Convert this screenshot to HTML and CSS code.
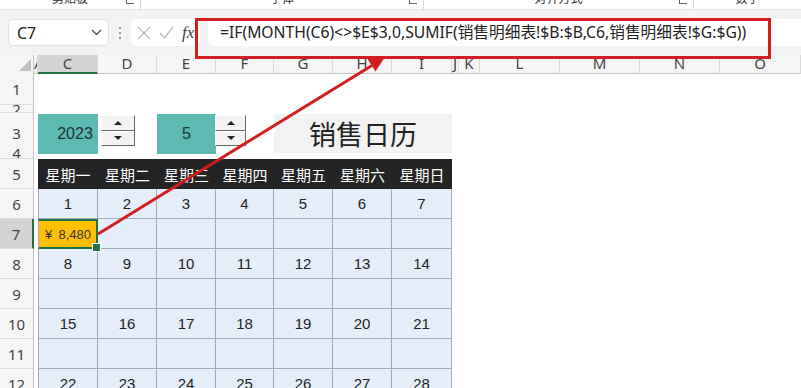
FILE: index.html
```html
<html>
    <head>
        <title>销售日历</title>
        <link rel="stylesheet" href="styles.css">
    </head>
    <body>
        <div class="ribbon">
            <div class="group g1"><span>剪贴板</span><i class="launch"></i></div>
            <div class="group g2"><span>字体</span><i class="launch"></i></div>
            <div class="group g3"><span>对齐方式</span><i class="launch"></i></div>
            <div class="group g4"><span>数字</span></div>
        </div>

        <div class="fbar">
            <div class="namebox">
                <span>C7</span>
                <svg width="11" height="7" viewBox="0 0 11 7"><path d="M1 1l4.5 4.5L10 1" fill="none" stroke="#555" stroke-width="1.4"/></svg>
            </div>
            <div class="grip"><b></b><b></b><b></b></div>
            <div class="fbtns">
                <svg width="14" height="14" viewBox="0 0 14 14"><path d="M1 1l12 12M13 1L1 13" stroke="#bdbdbd" stroke-width="1.3"/></svg>
                <svg width="15" height="14" viewBox="0 0 15 14"><path d="M1 7l4.5 5L14 1" fill="none" stroke="#bdbdbd" stroke-width="1.3"/></svg>
                <span class="fx">fx</span>
            </div>
            <div class="finput">=IF(MONTH(C6)&lt;&gt;$E$3,0,SUMIF(销售明细表!$B:$B,C6,销售明细表!$G:$G))</div>
        </div>

        <div class="sheet">
            <div class="row hdr">
                <div class="corner"><svg width="34" height="18"><polygon points="31,4 31,16 19,16" fill="#bfbfbf"/></svg></div>
                <div class="ch a">A</div>
                <div class="ch sel">C</div>
                <div class="ch">D</div>
                <div class="ch">E</div>
                <div class="ch">F</div>
                <div class="ch">G</div>
                <div class="ch">H</div>
                <div class="ch">I</div>
                <div class="ch">J</div>
                <div class="ch">K</div>
                <div class="ch">L</div>
                <div class="ch">M</div>
                <div class="ch">N</div>
                <div class="ch">O</div>
            </div>
            <div class="row r1"><div class="rh">1</div></div>
            <div class="row r2"><div class="rh">2</div></div>
            <div class="row r3">
                <div class="rh">3</div>
                <div></div>
                <div class="teal year">2023</div>
                <div><div class="spin"><span class="up"></span><span class="down"></span></div></div>
                <div class="teal">5</div>
                <div><div class="spin narrow"><span class="up"></span><span class="down"></span></div></div>
                <div class="title">销售日历</div>
            </div>
            <div class="row r4"><div class="rh">4</div></div>
            <div class="row r5">
                <div class="rh">5</div>
                <div></div>
                <div class="wd">星期一</div>
                <div class="wd">星期二</div>
                <div class="wd">星期三</div>
                <div class="wd">星期四</div>
                <div class="wd">星期五</div>
                <div class="wd">星期六</div>
                <div class="wd">星期日</div>
            </div>
            <div class="row">
                <div class="rh">6</div>
                <div></div>
                <div class="cell">1</div>
                <div class="cell">2</div>
                <div class="cell">3</div>
                <div class="cell">4</div>
                <div class="cell">5</div>
                <div class="cell">6</div>
                <div class="cell">7</div>
            </div>
            <div class="row">
                <div class="rh sel">7</div>
                <div></div>
                <div class="cell sel"><span>¥</span><span>8,480</span></div>
                <div class="cell"></div>
                <div class="cell"></div>
                <div class="cell"></div>
                <div class="cell"></div>
                <div class="cell"></div>
                <div class="cell"></div>
            </div>
            <div class="row">
                <div class="rh">8</div>
                <div></div>
                <div class="cell">8</div>
                <div class="cell">9</div>
                <div class="cell">10</div>
                <div class="cell">11</div>
                <div class="cell">12</div>
                <div class="cell">13</div>
                <div class="cell">14</div>
            </div>
            <div class="row">
                <div class="rh">9</div>
                <div></div>
                <div class="cell"></div>
                <div class="cell"></div>
                <div class="cell"></div>
                <div class="cell"></div>
                <div class="cell"></div>
                <div class="cell"></div>
                <div class="cell"></div>
            </div>
            <div class="row">
                <div class="rh">10</div>
                <div></div>
                <div class="cell">15</div>
                <div class="cell">16</div>
                <div class="cell">17</div>
                <div class="cell">18</div>
                <div class="cell">19</div>
                <div class="cell">20</div>
                <div class="cell">21</div>
            </div>
            <div class="row">
                <div class="rh">11</div>
                <div></div>
                <div class="cell"></div>
                <div class="cell"></div>
                <div class="cell"></div>
                <div class="cell"></div>
                <div class="cell"></div>
                <div class="cell"></div>
                <div class="cell"></div>
            </div>
            <div class="row">
                <div class="rh">12</div>
                <div></div>
                <div class="cell">22</div>
                <div class="cell">23</div>
                <div class="cell">24</div>
                <div class="cell">25</div>
                <div class="cell">26</div>
                <div class="cell">27</div>
                <div class="cell">28</div>
            </div>
        </div>

        <!-- red callout drawn over the sheet -->
        <svg class="overlay" width="801" height="388">
            <rect x="196.5" y="19.5" width="573" height="38" fill="none" stroke="#d11f1f" stroke-width="3"/>
            <line x1="98" y1="234" x2="372" y2="65.5" stroke="#d11f1f" stroke-width="3"/>
            <polygon points="385,57 375.5,71.5 367.5,59" fill="#d11f1f"/>
        </svg>
    </body>
</html>
```

FILE: styles.css
```css
body{
    margin: 0;
    width: 801px;
    height: 388px;
    overflow: hidden;
    position: relative;
    background: #fff;
    font-family: "Noto Sans", "Noto Sans CJK SC", sans-serif;
    color: #222;
}
*{
    box-sizing: border-box;
}

/* ribbon, only its bottom edge is visible */
.ribbon{
    display: flex;
    height: 10px;
    overflow: hidden;
    background: #fff;
    border-bottom: 1px solid #e2e2e2;
}
.group{
    position: relative;
    text-align: center;
    border-right: 1px solid #d4d4d4;
}
.g1{ width: 141px; }
.g2{ width: 283px; }
.g3{ width: 270px; }
.g4{ flex: 1; border-right: none; }
.group span{
    display: block;
    font-size: 12px;
    line-height: 14px;
    margin-top: -8px;
    color: #333;
}
.launch{
    position: absolute;
    right: 6px;
    top: -4px;
    width: 8px;
    height: 8px;
    border-left: 1px solid #666;
    border-bottom: 1px solid #666;
}

/* formula bar */
.fbar{
    display: flex;
    align-items: center;
    height: 45px;
    padding-left: 8px;
    background: #f3f3f3;
}
.namebox{
    width: 101px;
    height: 27px;
    display: flex;
    align-items: center;
    justify-content: space-between;
    padding: 0 6px 0 8px;
    background: #fff;
    border: 1px solid #e3e3e3;
    border-radius: 5px;
    font-size: 16px;
}
.grip{
    width: 22px;
    display: flex;
    flex-direction: column;
    align-items: center;
    gap: 3px;
}
.grip b{
    width: 2px;
    height: 2px;
    background: #999;
}
.fbtns{
    width: 69px;
    height: 27px;
    display: flex;
    align-items: center;
    gap: 8px;
    padding-left: 6px;
    background: #fff;
    border-radius: 5px;
}
.fx{
    font-family: "Liberation Serif", serif;
    font-style: italic;
    font-size: 17px;
    color: #444;
}
.finput{
    flex: 1;
    height: 27px;
    margin-left: 8px;
    padding-left: 12px;
    line-height: 27px;
    font-size: 15.7px;
    white-space: nowrap;
    background: #fff;
    border-radius: 5px 0 0 5px;
}

/* sheet grid */
.row{
    display: grid;
    grid-template-columns: 34px 4px 60px 59px 59px 58px 59px 59px 60px 7px 21px 80px 80px 80px 1fr;
    height: 30px;
}
.hdr{ height: 18px; }
.r1{ height: 32px; }
.r2{ height: 8px; }
.r3{ height: 34px; }
.r4{ height: 12px; }

.corner{
    background: #f5f5f5;
    border-right: 1px solid #c6c6c6;
    border-bottom: 1px solid #c6c6c6;
}
.ch{
    background: #f5f5f5;
    border-right: 1px solid #dadada;
    border-bottom: 1px solid #c6c6c6;
    font-size: 15px;
    line-height: 17px;
    color: #444;
    text-align: center;
    overflow: hidden;
}
.ch.a{
    text-align: left;
}
.ch.sel{
    background: #d3d3d3;
    border-bottom: 2px solid #217346;
}
.rh{
    display: flex;
    align-items: center;
    justify-content: center;
    overflow: hidden;
    background: #f5f5f5;
    border-right: 1px solid #c6c6c6;
    border-bottom: 1px solid #dcdcdc;
    font-size: 15px;
    color: #444;
}
.rh.sel{
    background: #d3d3d3;
    border-right: 2px solid #217346;
}

/* year / month inputs */
.teal{
    margin: 1px 0 0;
    display: flex;
    align-items: center;
    justify-content: center;
    background: #5db9b2;
    font-family: "Liberation Sans", sans-serif;
    font-size: 16px;
    color: #1b3434;
}
.year{
    padding-left: 14px;
}
.spin{
    width: 34px;
    height: 31px;
    margin: 2px 0 0 3px;
    display: flex;
    flex-direction: column;
}
.spin.narrow{
    width: 31px;
    margin-left: -1px;
}
.spin span{
    flex: 1;
    display: flex;
    align-items: center;
    justify-content: center;
    background: #f3f3f3;
    border-top: 1px solid #fff;
    border-left: 1px solid #fff;
    border-right: 1px solid #696969;
    border-bottom: 1px solid #696969;
}
.spin .up:before{
    content: "";
    border-left: 4px solid transparent;
    border-right: 4px solid transparent;
    border-bottom: 4px solid #222;
}
.spin .down:before{
    content: "";
    border-left: 4px solid transparent;
    border-right: 4px solid transparent;
    border-top: 4px solid #222;
}
.title{
    grid-column: span 3;
    margin: 1px 0;
    display: flex;
    align-items: center;
    justify-content: center;
    background: #f2f2f2;
    font-size: 27px;
    color: #222;
}

/* calendar */
.wd{
    display: flex;
    align-items: center;
    justify-content: center;
    background: #242424;
    color: #fff;
    font-size: 15px;
}
.cell{
    display: flex;
    align-items: center;
    justify-content: center;
    background: #e5eef8;
    border-right: 1px solid #a2acb8;
    border-bottom: 1px solid #a2acb8;
    font-family: "Liberation Sans", sans-serif;
    font-size: 15px;
    color: #222;
}
.row > .cell:nth-child(3){
    border-left: 1px solid #a2acb8;
}
.cell.sel{
    position: relative;
    justify-content: space-between;
    padding: 0 5px 0 6px;
    background: #ffc000;
    border: 2px solid #217346;
    font-size: 13px;
    color: #333;
}
.cell.sel:after{
    content: "";
    position: absolute;
    right: -5px;
    bottom: -5px;
    width: 7px;
    height: 7px;
    background: #217346;
    border: 1px solid #fff;
}

.overlay{
    position: absolute;
    left: 0;
    top: 0;
    pointer-events: none;
}
```
